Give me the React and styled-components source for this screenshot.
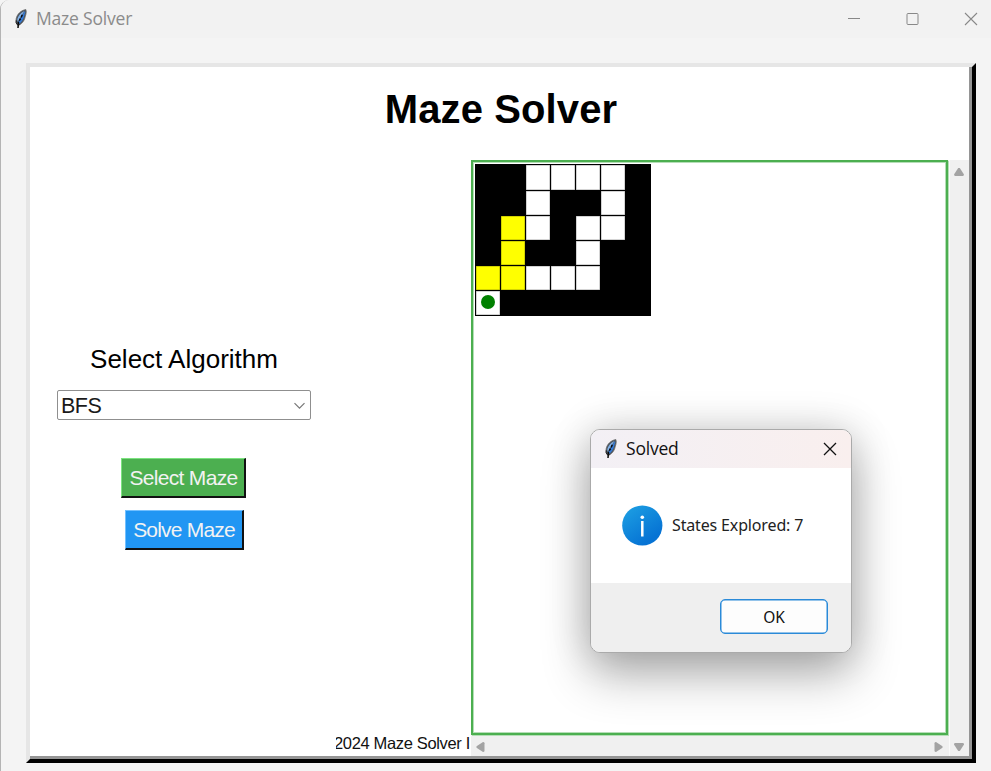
import React from "react";
import styled, { createGlobalStyle } from "styled-components";

const GlobalStyle = createGlobalStyle`
  * { box-sizing: border-box; }
  body { margin: 0; overflow: hidden; background: #f4f4f4; }
`;

const Window = styled.div`
  position: relative;
  width: 991px;
  height: 771px;
  overflow: hidden;
  display: flex;
  flex-direction: column;
  background: #f4f4f4;
  border-left: 1px solid #b4b4b4;
  border-top-left-radius: 9px;
  font-family: "Liberation Sans", Arial, sans-serif;
  color: #000;
`;

const EdgeMark = styled.span`
  position: absolute;
  left: -1px;
  top: ${(p) => p.$top}px;
  width: 1px;
  height: ${(p) => p.$height}px;
  background: ${(p) => p.$color};
`;

const TitleBar = styled.header`
  display: flex;
  align-items: center;
  flex: none;
  height: 38px;
  padding: 0 13px 0 12px;
  background: #f2f2f2;
`;

const WindowTitle = styled.span`
  flex: 1;
  margin: 0 0 2px ${(p) => p.$gap}px;
  font-family: "Open Sans", sans-serif;
  font-size: 17.5px;
  line-height: 24px;
  letter-spacing: ${(p) => p.$spacing}px;
  color: ${(p) => p.$color};
`;

const WindowControls = styled.div`
  display: flex;
  align-items: center;
  gap: 44.5px;
`;

const Frame = styled.main`
  width: 950px;
  height: 700px;
  margin: 25px 0 0 25px;
  border-style: solid;
  border-width: 4px;
  border-color: #e6e6e6 #000 #000 #e6e6e6;
`;

const FrameInner = styled.div`
  height: 100%;
  display: flex;
  flex-direction: column;
  background: #fff;
  border-right: 3px solid #959595;
  border-bottom: 3px solid #959595;
`;

const Heading = styled.h1`
  flex: none;
  margin: 0;
  height: 93px;
  padding: 18px 0 0 3px;
  text-align: center;
  font-size: 40px;
  line-height: 48px;
  letter-spacing: 0.1px;
`;

const Content = styled.div`
  flex: 1;
  display: flex;
  min-height: 0;
`;

const SidePanel = styled.section`
  width: 441px;
  display: flex;
  flex-direction: column;
`;

const Controls = styled.div`
  width: 308px;
  padding-top: 183px;
  flex: 1;
  display: flex;
  flex-direction: column;
  align-items: center;
`;

const Label = styled.label`
  font-size: 26px;
  line-height: 32px;
`;

const ComboBox = styled.div`
  width: 254px;
  height: 30px;
  margin-top: 15px;
  padding: 2px 4px 0 3px;
  display: flex;
  align-items: center;
  justify-content: space-between;
  border: 1px solid #8f8f8f;
  border-radius: 2px;
  font-size: 21.5px;
  letter-spacing: -0.5px;
  line-height: 27px;
  color: #1a1a1a;
`;

const Action = styled.button`
  width: ${(p) => p.$width}px;
  height: 40px;
  margin: ${(p) => p.$top}px ${(p) => p.$right}px 0 0;
  padding: 0 0 0 1px;
  border-style: solid;
  border-width: 1px 2px 2px 1px;
  border-color: ${(p) => p.$light} #111 #111 ${(p) => p.$light};
  background: ${(p) => p.$color};
  color: #f2f2f2;
  font-family: inherit;
  font-size: 21px;
  letter-spacing: ${(p) => p.$spacing}px;
  line-height: 37px;
  white-space: nowrap;
`;

const Footer = styled.footer`
  width: 135px;
  height: 24px;
  margin-left: 306px;
  display: flex;
  justify-content: flex-start;
  overflow: hidden;
  white-space: nowrap;
  font-size: 16.5px;
  letter-spacing: -0.35px;
  line-height: 22px;
  color: #111;
`;

const FooterText = styled.span`
  margin-left: -2px;
`;

const CanvasArea = styled.section`
  flex: 1;
  display: grid;
  grid-template-columns: 478px 20px;
  grid-template-rows: 576px 20px;
  background: #f0f0f0;
`;

const Canvas = styled.div`
  border: 2px solid #4caf50;
  box-shadow: inset 0 0 0 1px #b5deb7, 1px 1px 0 #b5deb7;
  background: #fff;
  padding: 2px;
  margin: 0 1px 1px 0;
`;

const Maze = styled.div`
  width: 176px;
  height: 152px;
  padding: 1px;
  display: grid;
  grid-template-columns: repeat(7, 24px);
  grid-template-rows: 25px repeat(5, 24px);
  gap: 1px;
  background: #000;
`;

const cellColors = { "#": "#000", ".": "#fff", y: "#ff0", s: "#fff" };

const Cell = styled.div`
  display: flex;
  align-items: center;
  justify-content: center;
  background: ${(p) => cellColors[p.$kind]};
  box-shadow: ${(p) => (p.$kind === "#" ? "none" : "inset 0 0 0 0.5px rgba(0, 0, 0, 0.35)")};
`;

const Marker = styled.span`
  width: 14px;
  height: 14px;
  margin-bottom: 2px;
  border-radius: 50%;
  background: #008000;
`;

const VerticalBar = styled.div`
  grid-row: 1 / 3;
  grid-column: 2;
  border-left: 1px solid #fafafa;
  display: flex;
  flex-direction: column;
  align-items: center;
  justify-content: space-between;
  padding: 7px 1px 4px 0;
`;

const HorizontalBar = styled.div`
  grid-row: 2;
  grid-column: 1;
  display: flex;
  align-items: center;
  justify-content: space-between;
  padding: 1px 5px 0 4px;
`;

const Dialog = styled.div`
  position: absolute;
  left: 589px;
  top: 429px;
  width: 262px;
  height: 224px;
  display: flex;
  flex-direction: column;
  overflow: hidden;
  border: 1px solid #aaa;
  border-radius: 10px;
  background: #fff;
  box-shadow: 0 22px 48px rgba(0, 0, 0, 0.3), 0 0 40px rgba(0, 0, 0, 0.16);
`;

const DialogBar = styled.div`
  flex: none;
  height: 38px;
  display: flex;
  align-items: center;
  padding: 0 14px 0 12px;
  background: linear-gradient(90deg, #f3f0f5, #f9efee);
`;

const DialogBody = styled.div`
  flex: 1;
  display: flex;
  align-items: center;
  gap: 9px;
  padding-left: 31px;
  font-family: "Noto Sans", sans-serif;
  font-size: 16px;
  letter-spacing: -0.15px;
  color: #222;
`;

const DialogText = styled.span`
  margin-bottom: 1px;
`;

const DialogFooter = styled.div`
  flex: none;
  height: 69px;
  display: flex;
  justify-content: flex-end;
  padding: 16px 23px 0 0;
  background: #efefef;
`;

const OkButton = styled.button`
  width: 108px;
  height: 35px;
  padding: 1px 0 0;
  border: 1px solid #2a8ad8;
  border-radius: 5px;
  background: #fdfdfd;
  color: #111;
  font-family: "Noto Sans", sans-serif;
  font-size: 15.5px;
  box-shadow: inset 0 0 0 0.5px #2a8ad8;
`;

const Feather = () => (
  <svg width="16" height="20" viewBox="0 0 16 20">
    <path d="M12.9.6C8 1.200 4 5.300 3.100 10l.1 3.500 1.400 2.300 1.800.2c2.500-1.500 4.400-3.700 5.300-6.500.7-2.700 2.200-5.900 1.200-8.900Z" fill="#4b5561" stroke="#666" strokeWidth=".8" />
    <path d="M11.500 2C8 3.500 4.900 6.800 4.300 10.700l.4 2L8.500 6.500 11.500 2Z" fill="#83b1e8" />
    <path d="M12 2.300 8 7.800l-2.500 5 .6 2c2.900-2 4.400-5 5-7.600L12.300 3Z" fill="#347bd9" />
    <path d="M9.300 5.800 8.200 8.500M7.600 9.500l-1.300 2.100M5.500 12.800 5 19" fill="none" stroke="#080808" strokeWidth="1.500" />
    <path d="M3.200 11.300v2.500l1.400 2.200 1.900-.5" fill="none" stroke="#181818" />
  </svg>
);

const Cross = ({ color, width }) => (
  <svg width="14" height="14" viewBox="0 0 14 14">
    <path d="M1 1l12 12M13 1 1 13" fill="none" stroke={color} strokeWidth={width} />
  </svg>
);

const arrows = {
  up: "M5.2 1h1.6l4.2 6.6q0 1.4-1.2 1.4H2.2Q1 9 1 7.6Z",
  down: "M5.2 9h1.6L11 2.4Q11 1 9.8 1H2.2Q1 1 1 2.4Z",
  left: "M1.5 5.2v1.6L8 11q1.5 0 1.5-1.2V2.2Q9.5 1 8 1Z",
  right: "M9.5 5.2v1.6L3 11q-1.5 0-1.5-1.2V2.2Q1.5 1 3 1Z",
};

const Arrow = ({ dir }) => (
  <svg width={dir === "up" || dir === "down" ? 12 : 11} height={dir === "up" || dir === "down" ? 10 : 12}>
    <path d={arrows[dir]} fill="#a3a3a3" />
  </svg>
);

const InfoIcon = () => (
  <svg width="41" height="41" viewBox="0 0 41 41">
    <defs>
      <linearGradient id="info" x1="0" y1="0" x2="0.7" y2="1">
        <stop offset=".1" stopColor="#1c9de2" />
        <stop offset=".9" stopColor="#0673d4" />
      </linearGradient>
    </defs>
    <circle cx="20.3" cy="20.5" r="20.1" fill="url(#info)" />
    <circle cx="20.3" cy="12.2" r="1.8" fill="#fff" />
    <path d="M20.3 16V31.5" stroke="#fff" strokeWidth="2.5" />
  </svg>
);

const mazeRows = ["##....#", "##.##.#", "#y.#..#", "#y##.##", "yy...##", "s######"];

export default function App() {
  return (
    <>
      <GlobalStyle />
      <Window>
        <EdgeMark $top={80} $height={40} $color="#6670ad" />
        <EdgeMark $top={735} $height={5} $color="#444" />
        <EdgeMark $top={752} $height={4} $color="#444" />
        <TitleBar>
          <Feather />
          <WindowTitle $gap={7} $spacing={-0.2} $color="#8b8b8b">Maze Solver</WindowTitle>
          <WindowControls>
            <svg width="14" height="14"><path d="M1 6.5h12" stroke="#888" /></svg>
            <svg width="14" height="14"><rect x="1" y="1.5" width="11" height="11" rx="1" fill="none" stroke="#888" /></svg>
            <Cross color="#888" width="1.1" />
          </WindowControls>
        </TitleBar>
        <Frame>
          <FrameInner>
            <Heading>Maze Solver</Heading>
            <Content>
              <SidePanel>
                <Controls>
                  <Label>Select Algorithm</Label>
                  <ComboBox>
                    BFS
                    <svg width="13" height="8"><path d="m1.5 1.2 5 5 5-5" fill="none" stroke="#777" strokeWidth="1.2" /></svg>
                  </ComboBox>
                  <Action $width={125} $top={38} $right={1} $spacing={-0.7} $color="#4caf50" $light="#7be37f">Select Maze</Action>
                  <Action $width={119} $top={12} $right={0} $spacing={-0.8} $color="#2196f3" $light="#72c0ff">Solve Maze</Action>
                </Controls>
                <Footer><FooterText>2024 Maze Solver I</FooterText></Footer>
              </SidePanel>
              <CanvasArea>
                <Canvas>
                  <Maze>
                    {mazeRows.flatMap((row, r) =>
                      [...row].map((kind, c) => (
                        <Cell key={`${r}-${c}`} $kind={kind}>{kind === "s" && <Marker />}</Cell>
                      ))
                    )}
                  </Maze>
                </Canvas>
                <VerticalBar><Arrow dir="up" /><Arrow dir="down" /></VerticalBar>
                <HorizontalBar><Arrow dir="left" /><Arrow dir="right" /></HorizontalBar>
              </CanvasArea>
            </Content>
          </FrameInner>
        </Frame>
        <Dialog role="dialog">
          <DialogBar>
            <Feather />
            <WindowTitle $gap={7} $spacing={-0.2} $color="#111">Solved</WindowTitle>
            <Cross color="#111" width="1.3" />
          </DialogBar>
          <DialogBody><InfoIcon /><DialogText>States Explored: 7</DialogText></DialogBody>
          <DialogFooter><OkButton>OK</OkButton></DialogFooter>
        </Dialog>
      </Window>
    </>
  );
}
